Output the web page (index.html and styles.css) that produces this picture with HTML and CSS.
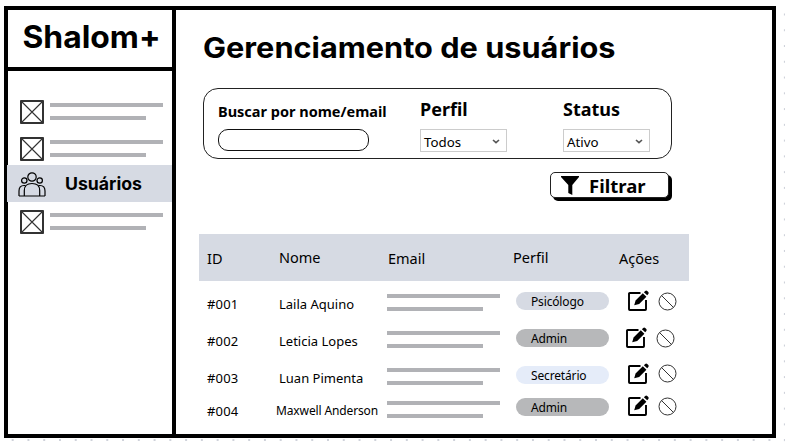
FILE: index.html
```html
<!DOCTYPE html>
<html lang="pt-BR">
<head>
<meta charset="utf-8">
<title>Shalom+ | Gerenciamento de usuários</title>
<link rel="stylesheet" href="styles.css">
</head>
<body>
<svg width="0" height="0" class="defs">
  <symbol id="box" viewBox="0 0 24 24"><rect x="1" y="1" width="22" height="22" fill="#fff" stroke="#000" stroke-width="1.6"/><path d="M1 1 23 23M23 1 1 23" stroke="#333" stroke-width="1.1"/></symbol>
  <symbol id="edit" viewBox="0 0 22 22"><path d="M12.5 3H1.8Q1 3 1 3.8V19.2Q1 20 1.8 20H17.2Q18 20 18 19.2V10" fill="none" stroke="#000" stroke-width="1.9"/><path d="M6.2 15.2 7.6 10.4 14.8 3.2 18.4 6.8 11.2 14Z"/><path d="M15.9 2.2 17.2.9Q18.2 0 19.2.9L20.3 2Q21.2 3 20.3 4L19.2 5.3Z"/></symbol>
  <symbol id="ban" viewBox="0 0 19 19"><circle cx="9.5" cy="9.5" r="8.5" fill="none" stroke="#333" stroke-width="1"/><path d="M3.5 3.5 15.5 15.5" stroke="#333" stroke-width="1"/></symbol>
</svg>
<div class="frame">
  <aside class="sidebar">
    <div class="brand"><svg class="brand-text" width="145" height="48"><text x="0.500" y="32" textLength="138" lengthAdjust="spacingAndGlyphs">Shalom+</text></svg></div>
    <nav class="menu">
      <div class="item"><svg class="box"><use href="#box"/></svg><div class="lines"><i></i><i></i></div></div>
      <div class="item second"><svg class="box"><use href="#box"/></svg><div class="lines"><i></i><i></i></div></div>
      <div class="item active">
        <svg class="people" viewBox="0 0 28 25" fill="none" stroke="#000" stroke-width="1.2"><path d="M1 24V19Q1 13.5 6 13.5H7.5M27 24V19Q27 13.5 22 13.5H20.500M1 24H27"/><circle cx="6.300" cy="8.500" r="2.700"/><circle cx="21.700" cy="8.500" r="2.700"/><path d="M6.300 24V18.500Q6.300 11.500 14 11.500T21.700 18.500V24"/><circle cx="14" cy="5" r="4.200"/></svg>
        <svg class="active-text" width="80" height="24"><text x="0" y="18" textLength="77" lengthAdjust="spacingAndGlyphs">Usuários</text></svg>
      </div>
      <div class="item last"><svg class="box"><use href="#box"/></svg><div class="lines"><i></i><i></i></div></div>
    </nav>
  </aside>
  <main class="content">
    <h1><svg class="title" width="420" height="40"><text x="0" y="30" textLength="412.500" lengthAdjust="spacingAndGlyphs">Gerenciamento de usuários</text></svg></h1>
    <section class="filters">
      <div class="field search"><label>Buscar por nome/email</label><div class="input"></div></div>
      <div class="field"><label>Perfil</label><div class="select">Todos<svg class="chev" viewBox="0 0 8 5"><path d="M1 1 4 3.700 7 1"/></svg></div></div>
      <div class="field"><label>Status</label><div class="select">Ativo<svg class="chev" viewBox="0 0 8 5"><path d="M1 1 4 3.700 7 1"/></svg></div></div>
    </section>
    <button class="apply"><svg class="funnel" viewBox="0 0 18 19"><path d="M0 0H18V1L11.300 9V19L7.300 17V9L0 1Z"/></svg>Filtrar</button>
    <section class="table">
      <div class="row head"><span>ID</span><span class="up">Nome</span><span>Email</span><span class="up">Perfil</span><span>Ações</span></div>
      <div class="row r1"><span class="id">#001</span><span class="name">Laila Aquino</span><div class="lines"><i></i><i></i></div><b class="pill blue">Psicólogo</b><div class="actions"><svg class="edit"><use href="#edit"/></svg><svg class="ban"><use href="#ban"/></svg></div></div>
      <div class="row r2"><span class="id">#002</span><span class="name">Leticia Lopes</span><div class="lines"><i></i><i></i></div><b class="pill gray">Admin</b><div class="actions"><svg class="edit"><use href="#edit"/></svg><svg class="ban"><use href="#ban"/></svg></div></div>
      <div class="row r3"><span class="id">#003</span><span class="name">Luan Pimenta</span><div class="lines"><i></i><i></i></div><b class="pill light">Secretário</b><div class="actions"><svg class="edit"><use href="#edit"/></svg><svg class="ban"><use href="#ban"/></svg></div></div>
      <div class="row r4"><span class="id">#004</span><span class="name">Maxwell Anderson</span><div class="lines"><i></i><i></i></div><b class="pill gray">Admin</b><div class="actions"><svg class="edit"><use href="#edit"/></svg><svg class="ban"><use href="#ban"/></svg></div></div>
    </section>
  </main>
</div>
</body>
</html>
```
FILE: styles.css
```css
* { box-sizing: border-box; }
html { height: 448px; overflow: hidden; }
body {
  margin: 0; padding: 6px 0 0 4px; height: 448px; overflow: hidden;
  font-family: "Noto Sans", "Open Sans", sans-serif; color: #000;
  background-color: #fff;
  background-image: radial-gradient(circle, #cfd2da 0.9px, transparent 1.3px), radial-gradient(circle, #cfd2da 0.9px, transparent 1.3px);
  background-size: 15.77px 15.77px, 15.77px 15.77px;
  background-position: 4.800px 432.100px, 776.600px 6.600px;
  background-repeat: repeat-x, repeat-y;
}
svg { display: block; flex: none; }
.defs { position: absolute; }
.frame { display: flex; width: 772px; height: 432px; border: 4px solid #000; background: #fff; }
.sidebar { width: 168px; border-right: 4px solid #000; }
.brand { height: 61px; border-bottom: 4px solid #000; padding: 6px 0 0 14px; }
.brand-text { font: 700 31px Inter, sans-serif; overflow: visible; }
.menu { padding-top: 22px; }
.item { display: flex; height: 37px; padding: 7px 0 0 12px; }
.box { width: 24px; height: 24px; }
.lines i { display: block; width: 113px; height: 4px; background: #b1b2b6; }
.lines i + i { width: 96px; margin-top: 8.500px; }
.item .lines { margin: 3px 0 0 5.600px; }
.item.second { height: 35px; padding-top: 7px; }
.item.active { background: #d6dae3; padding: 7px 0 0 11px; margin-left: -1px; }
.item.last { padding-top: 8px; }
.people { width: 28px; height: 25px; }
.active-text { margin-left: 19px; font: 700 17.500px Inter, sans-serif; }
.content { flex: 1; }
h1 { margin: 0; padding: 18px 0 0 27px; }
.title { font: 700 28.500px Inter, sans-serif; overflow: visible; }
.filters { display: flex; margin: 20px 0 0 27px; width: 469px; height: 71px; border: 1px solid #222; border-radius: 15px; padding-left: 14px; }
.field { flex: none; width: 143px; }
.field:last-child { width: 87px; }
.field label { display: block; height: 40px; padding-top: 8px; font-size: 18px; font-weight: 700; line-height: 24px; white-space: nowrap; }
.field.search { width: 202px; }
.search label { font-size: 14.500px; padding-top: 10px; }
.input { width: 151px; height: 22px; border: 1px solid #111; border-radius: 10px; }
.select { display: flex; align-items: center; justify-content: space-between; width: 87px; height: 23px; border: 1px solid #ccc; padding: 2px 6px 0 3px; font-size: 13.300px; }
.chev { width: 8px; height: 5px; fill: none; stroke: #555; stroke-width: 1.600; }
.apply { display: flex; margin: 13px 0 0 374px; width: 119px; height: 26px; border: 1px solid #222; border-radius: 5px; box-shadow: 3px 3px 0 #000; background: #fff; padding: 3px 0 0 10px; font: 700 18.500px/20px "Noto Sans", sans-serif; color: #000; }
.funnel { width: 18px; height: 19px; margin-right: 10px; }
.table { margin: 36px 0 0 23px; width: 490px; }
.row { display: grid; grid-template-columns: 72px 109px 125px 106px 1fr; height: 37px; padding-left: 8px; }
.head { height: 47px; background: #d6dae3; font-size: 14.500px; line-height: 20px; padding-top: 14px; }
.head .up { margin-top: -1px; }
.row .id, .row .name { font-size: 13px; line-height: 18px; padding-top: 14px; white-space: nowrap; }
.row .id { letter-spacing: 0.200px; }
.row .lines { padding-top: 13px; margin-left: -0.600px; }
.pill { display: block; margin: 11px 0 0 3px; width: 93px; height: 18px; border-radius: 9px; padding-left: 15px; font-size: 12px; line-height: 19px; font-weight: 400; letter-spacing: -0.150px; }
.blue { background: #d6dae3; }
.gray { background: #b7b8ba; }
.light { background: #e5ecf9; }
.actions { display: flex; padding: 9px 0 0 9px; gap: 8px; }
.edit { width: 22px; height: 22px; }
.ban { width: 19px; height: 19px; margin-top: 1.500px; }
.r2 .actions { padding: 9px 0 0 7px; }
.r3 { height: 33px; }
.r3 .actions { padding-top: 7.500px; }
.r4 .name { font-size: 12px; margin-left: -3px; padding-top: 14px; letter-spacing: -0.130px; }
.r4 .pill { margin-top: 10px; }
.r4 .actions { padding-top: 7px; }
```
